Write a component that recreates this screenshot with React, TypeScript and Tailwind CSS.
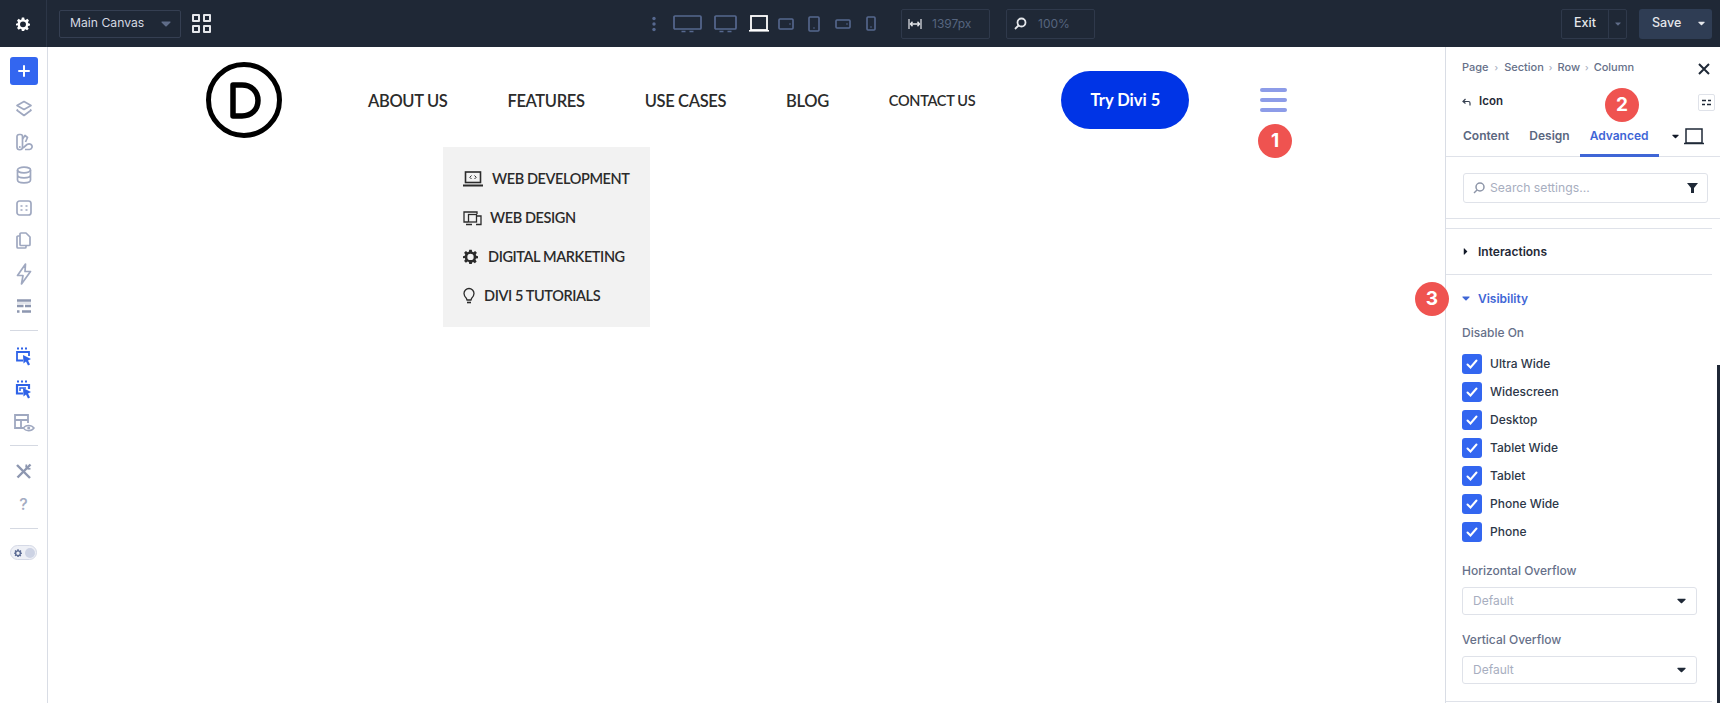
import React from "react";

const C = { dim: "#56688f", side: "#9fa8c0", blue: "#2f63e8" };

function Svg({ w, h, children, className = "" }: { w: number; h: number; children: React.ReactNode; className?: string }) {
  return (
    <svg width={w} height={h} viewBox={`0 0 ${w} ${h}`} fill="none" className={`block shrink-0 ${className}`}>
      {children}
    </svg>
  );
}

const Caret = ({ color = "#111827", w = 10, h = 6, rot = 0 }: { color?: string; w?: number; h?: number; rot?: number }) => (
  <svg width={w} height={h} viewBox="0 0 10 6" className="block shrink-0" style={{ transform: `rotate(${rot}deg)` }}>
    <path d="M1 .5h8a.6.6 0 0 1 .45 1L5.4 5.4a.6.6 0 0 1-.8 0L.55 1.5A.6.6 0 0 1 1 .5z" fill={color} />
  </svg>
);

const Gear = ({ size = 14, color = "#fff" }: { size?: number; color?: string }) => (
  <svg width={size} height={size} viewBox="0 0 24 24" className="block shrink-0">
    <path
      fillRule="evenodd"
      fill={color}
      d="M10 1h4l.7 3.2 1.9.8 2.8-1.8 2.8 2.8-1.8 2.8.8 1.9L24 11.4v3.2l-3.2.7-.8 1.9 1.8 2.8-2.8 2.8-2.8-1.8-1.5.7L14 24h-4l-.7-3.3-1.9-.7-2.8 1.8-2.8-2.8 1.8-2.8-.8-1.9L0 14.6v-3.2l2.8-.7.8-1.9-1.8-2.8 2.8-2.8 2.8 1.8 1.9-.8zM12 7.500a5.100 5.100 0 1 0 0 10.200a5.100 5.100 0 0 0 0-10.200z"
    />
  </svg>
);

function SideItem({ children, h = 33 }: { children: React.ReactNode; h?: number }) {
  return <div className="flex items-center justify-center w-full" style={{ height: h }}>{children}</div>;
}

function SideLine() {
  return <div className="h-px w-[28px] bg-[#d5d9e2] mx-auto" />;
}

function BlueCursorIcon({ thick }: { thick?: boolean }) {
  const sw = thick ? 2.2 : 1.8;
  return (
    <Svg w={18} h={20}>
      <path d="M2 1.500h2M6 1.500h2M10 1.500h2" stroke={C.blue} strokeWidth="2" />
      <path d={"M8 13.500H2V5h12v4"} stroke={C.blue} strokeWidth={sw} />
      {thick && <path d="M5 11V8h6" stroke={C.blue} strokeWidth="1.500" />}
      <path d="M8 8l8 4-3 1.500 2 4-2 1-2-4-2.500 2z" fill={C.blue} />
    </Svg>
  );
}

function Sidebar() {
  const s = C.side;
  const w = "1.700";
  return (
    <div className="w-[48px] shrink-0 border-r border-[#d9dde5] bg-white flex flex-col items-center pt-[10px]">
      <div className="w-[28px] h-[28px] rounded-[3px] bg-[#3366f0] flex items-center justify-center">
        <Svg w={12} h={12}><path d="M6 1v10M1 6h10" stroke="#fff" strokeWidth="2" strokeLinecap="round" /></Svg>
      </div>
      <div className="h-[7px]" />
      <SideItem>
        <Svg w={18} h={18}>
          <path d="M9 1.500l7 4-7 4-7-4z" stroke={s} strokeWidth={w} strokeLinejoin="round" />
          <path d="M3 9.500l-1 .8 7 5.200 7-5.200-1-.8" stroke={s} strokeWidth={w} strokeLinejoin="round" />
        </Svg>
      </SideItem>
      <SideItem>
        <Svg w={18} h={18}>
          <path d="M2 3.500a2 2 0 0 1 2-2h1.500a2 2 0 0 1 2 2V14a2.700 2.700 0 0 1-5.500 0z" stroke={s} strokeWidth={w} />
          <path d="M7.500 6l2.500-3.500 2.500 2-2 4.500M10 16.500h4.500a2.800 2.800 0 0 0 1.500-5c-1.500-1-3-.5-4 0L8 15" stroke={s} strokeWidth={w} strokeLinejoin="round" />
          <circle cx="4.800" cy="14" r="1" fill={s} />
        </Svg>
      </SideItem>
      <SideItem>
        <Svg w={16} h={18}>
          <ellipse cx="8" cy="4" rx="6.500" ry="2.800" stroke={s} strokeWidth={w} />
          <path d="M1.500 4v10c0 1.600 3 2.800 6.500 2.800s6.500-1.200 6.500-2.800V4M1.500 9c0 1.600 3 2.800 6.500 2.800s6.500-1.200 6.500-2.800" stroke={s} strokeWidth={w} />
        </Svg>
      </SideItem>
      <SideItem>
        <Svg w={16} h={16}>
          <rect x="1" y="1" width="14" height="14" rx="2.500" stroke={s} strokeWidth={w} />
          <path d="M4.500 6h2M9.500 6h2M4.500 10h2M9.500 10h2" stroke={s} strokeWidth={w} />
        </Svg>
      </SideItem>
      <SideItem>
        <Svg w={15} h={17}>
          <path d="M5 1h5l4 4v7.500a1 1 0 0 1-1 1H5a1 1 0 0 1-1-1V2a1 1 0 0 1 1-1z" stroke={s} strokeWidth={w} strokeLinejoin="round" />
          <path d="M4 4H2a1 1 0 0 0-1 1v10a1 1 0 0 0 1 1h7a1 1 0 0 0 1-1v-1.500" stroke={s} strokeWidth={w} />
        </Svg>
      </SideItem>
      <SideItem>
        <Svg w={16} h={22}>
          <path d="M9.500 1L1.500 12.500h5.500L5.500 21l9-12.500H9z" stroke={s} strokeWidth={w} strokeLinejoin="round" />
        </Svg>
      </SideItem>
      <SideItem>
        <Svg w={16} h={15}>
          <path d="M1 1.500h14M1 7h6.500M9 7h6M1 12.500h2.500M6 12.500h9" stroke="#8d97b0" strokeWidth="2.400" />
          <path d="M1 4h14" stroke="#c7ccd9" strokeWidth="1" />
        </Svg>
      </SideItem>
      <div className="h-[7px]" />
      <SideLine />
      <div className="h-[9px]" />
      <SideItem h={33}><BlueCursorIcon /></SideItem>
      <SideItem h={33}><BlueCursorIcon thick /></SideItem>
      <SideItem h={33}>
        <Svg w={22} h={20}>
          <path d="M11 15H2V2h13v8M2 7h13M8 7v8" stroke={s} strokeWidth="1.800" />
          <path d="M10.500 15c2-3.500 8-3.500 10.500 0-2.500 3.500-8.500 3.500-10.500 0z" fill="#fff" stroke={s} strokeWidth="1.500" />
          <circle cx="15.700" cy="15" r="1.500" fill={s} />
        </Svg>
      </SideItem>
      <div className="h-[6px]" />
      <SideLine />
      <div className="h-[9px]" />
      <SideItem h={33}>
        <Svg w={17} h={17}>
          <path d="M2 2l13 13" stroke="#8d97b0" strokeWidth="2.400" />
          <path d="M15.500 1.500l-13 13" stroke="#8d97b0" strokeWidth="2.400" />
          <path d="M11.500 1.500a3.300 3.300 0 0 0 .5 3.500M15.500 5.500a3.300 3.300 0 0 1-3.500-.5" stroke="#8d97b0" strokeWidth="1.800" />
        </Svg>
      </SideItem>
      <SideItem h={31}><span className="text-[16px] font-medium leading-none text-[#a3abc2] font-['Inter',sans-serif]">?</span></SideItem>
      <div className="h-[9px]" />
      <SideLine />
      <div className="h-[16px]" />
      <div className="w-[27px] h-[15px] rounded-full border border-[#d5d9e6] bg-[#eef0f6] flex items-center pl-[3px] gap-[3px]">
        <Gear size={8} color="#5a6a93" />
        <div className="w-[10px] h-[10px] rounded-full bg-[#cdd3e4]" />
      </div>
    </div>
  );
}

function DeviceBox({ w, h, active, foot }: { w: number; h: number; active?: boolean; foot?: boolean }) {
  const c = active ? "#fff" : C.dim;
  return (
    <Svg w={w} h={h + (foot ? 3 : 0)}>
      <rect x="1" y="1" width={w - 2} height={h - 2} rx="1" stroke={c} strokeWidth="1.700" />
      {foot && <path d={`M${w / 2 - 6} ${h + 1.500}h4M${w / 2 + 2} ${h + 1.500}h4`} stroke={c} strokeWidth="1.500" />}
    </Svg>
  );
}

function TopBar() {
  return (
    <div className="h-[47px] shrink-0 bg-[#1f2836] flex items-center font-['Inter',sans-serif]">
      <div className="w-[47px] h-full border-r border-[#2c3647] flex items-center justify-center">
        <Gear size={14} />
      </div>
      <div className="ml-[12px] w-[122px] h-[28px] rounded-[2px] border border-[#353f52] flex items-center pl-[10px] pr-[9px] justify-between">
        <span className="text-[12.200px] text-[#d5d9e2]">Main Canvas</span>
        <Caret color="#5f6c88" />
      </div>
      <div className="ml-[11px] w-[19px] h-[19px] grid grid-cols-2 gap-[3px]">
        {[0, 1, 2, 3].map((i) => <div key={i} className="border-2 border-[#e5e7eb] rounded-[1px]" />)}
      </div>
      <div className="ml-[441px] flex items-center">
        <Svg w={4} h={16}>
          <circle cx="2" cy="2.500" r="1.700" fill={C.dim} /><circle cx="2" cy="8" r="1.700" fill={C.dim} /><circle cx="2" cy="13.500" r="1.700" fill={C.dim} />
        </Svg>
        <div className="ml-[17px]"><DeviceBox w={29} h={15} foot /></div>
        <div className="ml-[12px]"><DeviceBox w={23} h={15} foot /></div>
        <div className="ml-[12px]">
          <Svg w={20} h={17}>
            <rect x="2" y="1" width="16" height="14" stroke="#fff" strokeWidth="1.800" />
            <path d="M0 15.800h20" stroke="#fff" strokeWidth="1.600" />
          </Svg>
        </div>
        <div className="ml-[9px]">
          <Svg w={16} h={12}>
            <rect x="1" y="1" width="14" height="10" rx="1" stroke={C.dim} strokeWidth="1.600" />
            <circle cx="12" cy="6" r=".8" fill={C.dim} />
          </Svg>
        </div>
        <div className="ml-[14px]">
          <Svg w={12} h={16}>
            <rect x="1" y="1" width="10" height="14" rx="1" stroke={C.dim} strokeWidth="1.600" />
            <circle cx="6" cy="12" r=".8" fill={C.dim} />
          </Svg>
        </div>
        <div className="ml-[15px]">
          <Svg w={16} h={10}>
            <rect x="1" y="1" width="14" height="8" rx="1" stroke={C.dim} strokeWidth="1.600" />
            <circle cx="12" cy="5" r=".8" fill={C.dim} />
          </Svg>
        </div>
        <div className="ml-[15px]">
          <Svg w={10} h={15}>
            <rect x="1" y="1" width="8" height="13" rx="1" stroke={C.dim} strokeWidth="1.600" />
            <circle cx="5" cy="11" r=".8" fill={C.dim} />
          </Svg>
        </div>
      </div>
      <div className="ml-[25px] w-[89px] h-[30px] rounded-[2px] border border-[#2f394b] flex items-center pl-[6px] gap-[10px]">
        <Svg w={14} h={12}>
          <path d="M1 1v10M13 1v10" stroke="#e5e7eb" strokeWidth="1.200" />
          <path d="M2 6h10M4.500 3.800L2.500 6l2 2.200M9.500 3.800l2 2.200-2 2.200" stroke="#e5e7eb" strokeWidth="1.400" />
        </Svg>
        <span className="text-[12px] text-[#56657f]">1397px</span>
      </div>
      <div className="ml-[16px] w-[89px] h-[30px] rounded-[2px] border border-[#2f394b] flex items-center pl-[7px] gap-[11px]">
        <Svg w={13} h={13}>
          <circle cx="7.500" cy="5.500" r="4" stroke="#e5e7eb" strokeWidth="1.800" />
          <path d="M4.500 8.500L1 12" stroke="#e5e7eb" strokeWidth="1.800" />
        </Svg>
        <span className="text-[12px] text-[#56657f]">100%</span>
      </div>
      <div className="ml-auto flex items-center pr-[8px]">
        <div className="w-[66px] h-[30px] rounded-[2px] border border-[#2f394b] flex items-center">
          <span className="w-[46px] text-center text-[12.500px] font-medium text-[#e5e7eb]">Exit</span>
          <div className="flex-1 h-full border-l border-[#2f394b] flex items-center justify-center"><Caret color="#5f6c88" w={6} h={4} /></div>
        </div>
        <div className="ml-[12px] w-[73px] h-[30px] rounded-[3px] bg-[#2f3d54] flex items-center pl-[13px] justify-between pr-[7px]">
          <span className="text-[12.500px] font-medium text-[#e5e7eb]">Save</span>
          <Caret color="#e5e7eb" w={7} h={5} />
        </div>
      </div>
    </div>
  );
}

const Badge = ({ n, className }: { n: number; className: string }) => (
  <div className={`absolute w-[34px] h-[34px] rounded-full bg-[#ef5350] text-white font-bold text-[19px] flex items-center justify-center font-['Inter',sans-serif] ${className}`}>{n}</div>
);

function NavLink({ children, small, className = "" }: { children: React.ReactNode; small?: boolean; className?: string }) {
  return <a className={`pt-[2px] font-semibold text-[#2b2b2b] whitespace-nowrap ${small ? "text-[14.500px] tracking-[-0.3px]" : "text-[16.500px] tracking-[-0.35px]"} ${className}`}>{children}</a>;
}

function Dropdown() {
  const ink = "#2b2b2b";
  const rows: [React.ReactNode, string, number][] = [
    [<Svg w={20} h={16} key="a"><rect x="2.500" y="1" width="15" height="10.500" stroke={ink} strokeWidth="1.600" /><path d="M0 14.500h20" stroke={ink} strokeWidth="2" /><path d="M8.500 4.500L6.800 6.300l1.700 1.700M11.500 4.500l1.700 1.800-1.700 1.700" stroke={ink} strokeWidth="1" /></Svg>, "WEB DEVELOPMENT", 9],
    [<Svg w={19} h={16} key="b"><path d="M5 12H1V2h13v2" stroke={ink} strokeWidth="1.300" /><rect x="5.500" y="4.500" width="8" height="7.500" stroke={ink} strokeWidth="1.300" /><path d="M14 6h4v8.500h-5M3 14.500h6" stroke={ink} strokeWidth="1.300" /></Svg>, "WEB DESIGN", 8],
    [<span key="c" className="block"><Gear size={15} color={ink} /></span>, "DIGITAL MARKETING", 10],
    [<Svg w={12} h={17} key="d"><path d="M3.500 11.500C2 10 1 8.500 1 6.500a5 5 0 0 1 10 0c0 2-1 3.500-2.500 5l-.5 1.500H4z" stroke={ink} strokeWidth="1.300" /><path d="M4 15.500h4" stroke={ink} strokeWidth="1.600" /></Svg>, "DIVI 5 TUTORIALS", 9],
  ];
  return (
    <div className="absolute left-[395px] top-[100px] w-[207px] h-[180px] bg-[#f2f2f2] pl-[20px] pt-[13px] flex flex-col">
      {rows.map(([icon, t, g]) => (
        <div key={t} className="h-[38.700px] flex items-center" style={{ gap: g }}>
          {icon}
          <span className="text-[14.500px] tracking-[-0.4px] font-semibold text-[#2b2b2b] whitespace-nowrap">{t}</span>
        </div>
      ))}
    </div>
  );
}

function Canvas() {
  return (
    <div className="relative flex-1 bg-white font-['Lato',sans-serif]">
      <div className="h-[106px] flex items-center pl-[158px]">
        <div className="w-[76px] h-[76px] rounded-full border-[5px] border-black flex items-center justify-center">
          <Svg w={31} h={37} className="ml-[3px]">
            <path d="M3 3h9c9 0 16 6 16 15.500s-7 15.500-16 15.500H3z" stroke="#000" strokeWidth="5.500" strokeLinejoin="round" />
          </Svg>
        </div>
        <NavLink className="ml-[86px]">ABOUT US</NavLink>
        <NavLink className="ml-[60px]">FEATURES</NavLink>
        <NavLink className="ml-[60px]">USE CASES</NavLink>
        <NavLink className="ml-[60px]">BLOG</NavLink>
        <NavLink small className="ml-[60px]">CONTACT US</NavLink>
        <div className="ml-[86px] w-[128px] h-[58px] rounded-full bg-[#0034e6] flex items-center justify-center text-white font-bold text-[16.500px]">Try Divi 5</div>
        <div className="ml-[71px] w-[27px] flex flex-col gap-[6px]">
          <div className="h-[4px] rounded-full bg-[#8d9ce8]" />
          <div className="h-[4px] rounded-full bg-[#8d9ce8]" />
          <div className="h-[4px] rounded-full bg-[#8d9ce8]" />
        </div>
      </div>
      <Dropdown />
      <Badge n={1} className="left-[1210px] top-[77px]" />
    </div>
  );
}

function Check({ label }: { label: string }) {
  return (
    <div className="h-[28px] flex items-center gap-[8px]">
      <div className="w-[20px] h-[20px] rounded-[3px] bg-[#3366f0] flex items-center justify-center">
        <Svg w={12} h={10}><path d="M1.500 5.500L4.500 8.500L10.500 1.500" stroke="#fff" strokeWidth="2" strokeLinecap="round" /></Svg>
      </div>
      <span className="text-[12px] font-medium text-[#2d3748]">{label}</span>
    </div>
  );
}

function SelectBox({ w, text }: { w: number; text: string }) {
  return (
    <div className="h-[28px] rounded-[3px] border border-[#dfe2e9] flex items-center pl-[10px] pr-[10px] justify-between" style={{ width: w }}>
      <span className="text-[12px] text-[#a7aec0]">{text}</span>
      <Caret color="#1f2937" w={9} h={6} />
    </div>
  );
}

function Panel() {
  const sep = "h-px bg-[#dfe2e9]";
  return (
    <div className="relative w-[275px] shrink-0 border-l border-[#d9dde5] bg-white font-['Inter',sans-serif] overflow-hidden">
      <div className="h-[40px] pl-[16px] pr-[10px] flex items-center justify-between pt-[1px]">
        <div className="flex items-center gap-[5px] text-[11px] text-[#667089] font-medium">
          <span>Page</span><span className="text-[9px] text-[#a7aec0] mx-[1px]">›</span>
          <span>Section</span><span className="text-[9px] text-[#a7aec0]">›</span>
          <span>Row</span><span className="text-[9px] text-[#a7aec0]">›</span>
          <span>Column</span>
        </div>
        <Svg w={12} h={12} className="mt-[2px]"><path d="M1 1l10 10M11 1L1 11" stroke="#1f2937" strokeWidth="2" /></Svg>
      </div>
      <div className="h-[29px] pl-[16px] pr-[3px] flex items-center pt-[1px]">
        <Svg w={9} h={8}><path d="M3.500 1L1 3.500l2.500 2M1 3.500h5.500c1 0 1.500.5 1.500 1.500v2.500" stroke="#374151" strokeWidth="1.200" /></Svg>
        <span className="ml-[8px] text-[11.500px] font-semibold text-[#1f2937]">Icon</span>
        <div className="ml-auto mr-[2px] w-[17px] h-[17px] rounded-[2px] border border-[#dfe2e9] flex items-center justify-center">
          <Svg w={9} h={7}><path d="M0 1.500h4M6 1.500h3M0 5.500h3M5 5.500h4" stroke="#1f2937" strokeWidth="1.500" /></Svg>
        </div>
      </div>
      <div className="h-[41px] border-b border-[#dfe2e9] flex items-center pl-[17px] text-[12px] font-semibold relative">
        <span className="text-[#5b6780]">Content</span>
        <span className="ml-[20px] text-[#5b6780]">Design</span>
        <span className="ml-[20px] text-[#3f66d6]">Advanced</span>
        <div className="absolute left-[134px] bottom-[-1px] w-[79px] h-[3px] bg-[#3f66d6]" />
        <div className="ml-[23px]"><Caret w={7} h={5} color="#111827" /></div>
        <div className="ml-[5px]">
          <Svg w={20} h={17}>
            <rect x="2" y="1" width="16" height="14" stroke="#1f2937" strokeWidth="1.500" />
            <path d="M0 15.500h20" stroke="#1f2937" strokeWidth="1.500" />
          </Svg>
        </div>
      </div>
      <div className="pl-[17px] pt-[16px]">
        <div className="w-[245px] h-[30px] rounded-[3px] border border-[#dfe2e9] flex items-center pl-[9px] pr-[9px]">
          <Svg w={12} h={12}>
            <circle cx="7" cy="5" r="4" stroke="#8d95a8" strokeWidth="1.500" />
            <path d="M4 8L1 11" stroke="#8d95a8" strokeWidth="1.500" />
          </Svg>
          <span className="ml-[5px] text-[12.200px] text-[#a7aec0]">Search settings...</span>
          <div className="ml-auto">
            <Svg w={11} h={10}><path d="M0 0h11L7 5v5H4V5z" fill="#1f2937" /></Svg>
          </div>
        </div>
      </div>
      <div className={`${sep} mt-[15px]`} />
      <div className={`${sep} mt-[9px] mr-[8px]`} />
      <div className="h-[45px] pl-[16px] flex items-center gap-[9px]">
        <Caret color="#111827" w={7} h={5} rot={-90} />
        <span className="text-[12px] font-semibold text-[#1f2937]">Interactions</span>
      </div>
      <div className={`${sep} mr-[8px]`} />
      <div className="h-[47px] pl-[16px] flex items-center gap-[8px]">
        <Caret color="#3f66d6" w={8} h={5} />
        <span className="text-[12px] font-semibold text-[#3f66d6]">Visibility</span>
      </div>
      <div className="pl-[16px] text-[12px] font-medium text-[#667089] leading-[20px] mt-[1px]">Disable On</div>
      <div className="pl-[16px] mt-[7px] flex flex-col">
        {["Ultra Wide", "Widescreen", "Desktop", "Tablet Wide", "Tablet", "Phone Wide", "Phone"].map((l) => <Check key={l} label={l} />)}
      </div>
      <div className="pl-[16px] mt-[15px] text-[12px] font-medium text-[#667089] leading-[20px]">Horizontal Overflow</div>
      <div className="pl-[16px] mt-[6px]"><SelectBox w={235} text="Default" /></div>
      <div className="pl-[16px] mt-[15px] text-[12px] font-medium text-[#667089] leading-[20px]">Vertical Overflow</div>
      <div className="pl-[16px] mt-[6px]"><SelectBox w={235} text="Default" /></div>
      <div className={`${sep} mt-[17px] mr-[8px]`} />
      <div className="absolute right-0 top-[318px] bottom-0 w-[3px] bg-[#1f2836]" />
      <Badge n={2} className="left-[159px] top-[41px]" />
    </div>
  );
}

export default function App() {
  return (
    <div className="relative w-[1720px] h-[703px] overflow-hidden flex flex-col bg-white">
      <TopBar />
      <div className="flex flex-1 min-h-0">
        <Sidebar />
        <Canvas />
        <Panel />
      </div>
      <Badge n={3} className="left-[1415px] top-[282px]" />
    </div>
  );
}
